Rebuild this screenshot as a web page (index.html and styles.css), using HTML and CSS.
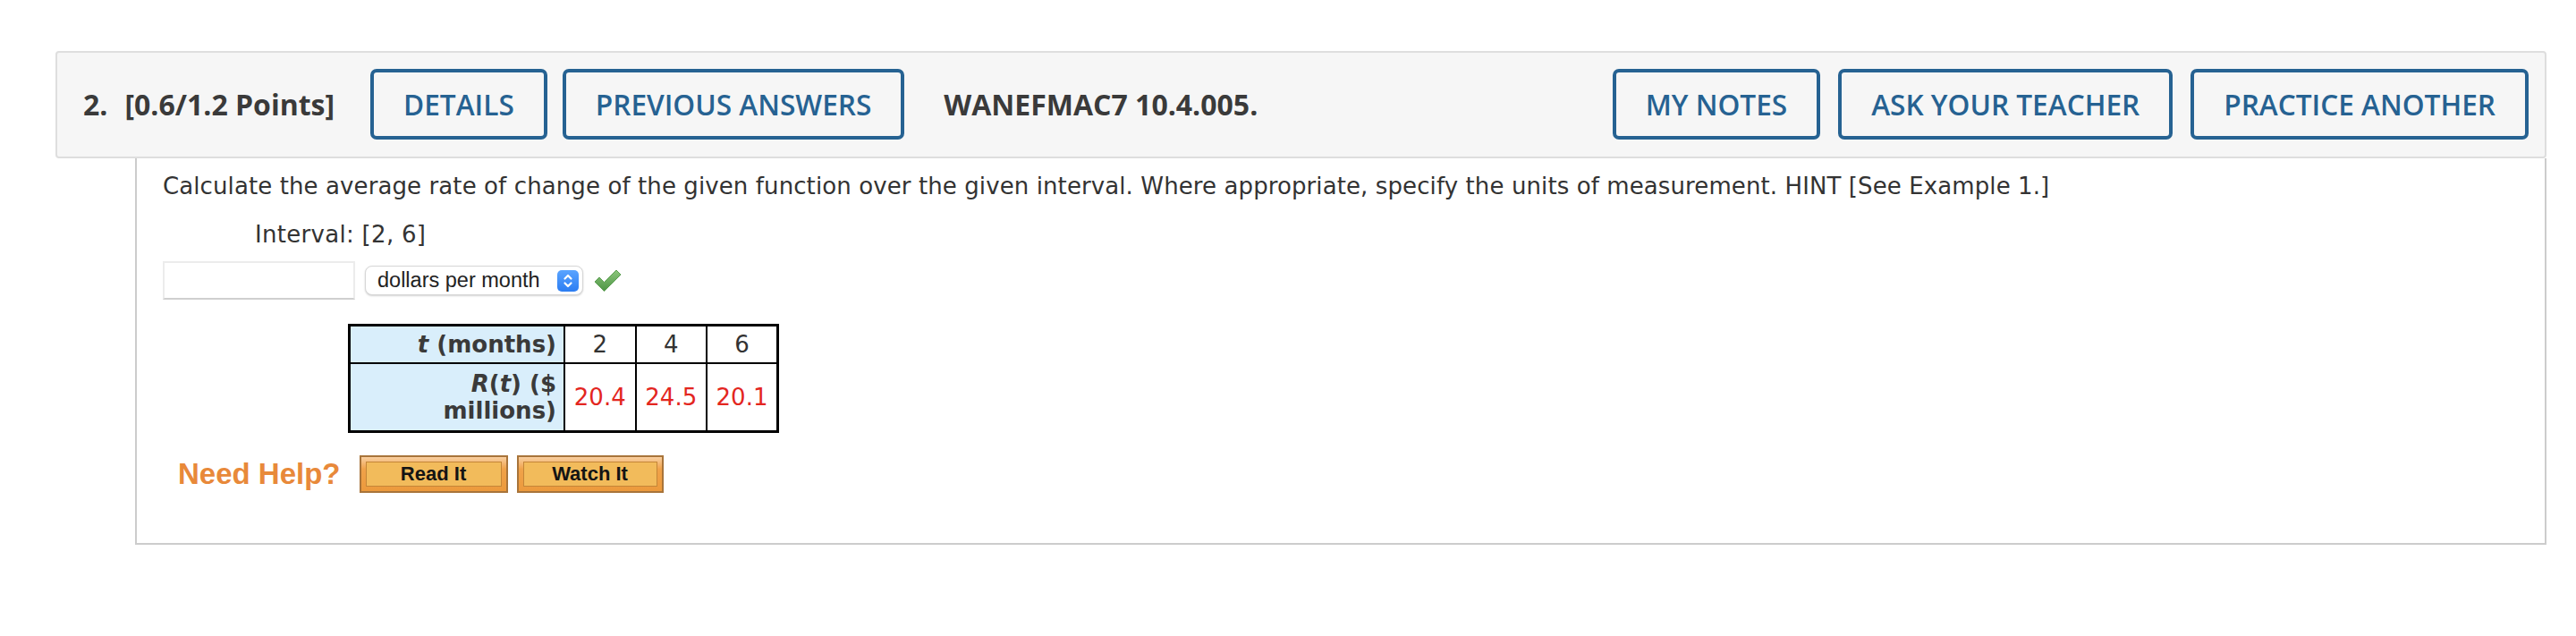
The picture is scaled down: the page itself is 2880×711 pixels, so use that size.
FILE: index.html
```html
<!DOCTYPE html>
<html lang="en">
<head>
<meta charset="utf-8">
<title>Question 2</title>
<link rel="stylesheet" href="styles.css">
</head>
<body>
<div class="question">
  <div class="q-header">
    <span class="q-num">2.</span>
    <span class="q-points">[0.6/1.2 Points]</span>
    <button class="q-btn q-btn-first">DETAILS</button>
    <button class="q-btn">PREVIOUS ANSWERS</button>
    <span class="q-code">WANEFMAC7 10.4.005.</span>
    <button class="q-btn q-btn-right">MY NOTES</button>
    <button class="q-btn">ASK YOUR TEACHER</button>
    <button class="q-btn">PRACTICE ANOTHER</button>
  </div>
  <div class="q-body">
    <p class="prompt">Calculate the average rate of change of the given function over the given interval. Where appropriate, specify the units of measurement. HINT [See Example 1.]</p>
    <p class="interval">Interval: [2, 6]</p>
    <div class="answer-row">
      <div class="answer-input"></div>
      <div class="unit-select">
        <span class="unit-text">dollars per month</span>
        <span class="stepper">
          <svg width="24" height="24" viewBox="0 0 24 24"><path d="M8.5 9.5 L12 6 L15.5 9.5" fill="none" stroke="#fff" stroke-width="2.2" stroke-linecap="round" stroke-linejoin="round"/><path d="M8.5 14.5 L12 18 L15.5 14.5" fill="none" stroke="#fff" stroke-width="2.2" stroke-linecap="round" stroke-linejoin="round"/></svg>
        </span>
      </div>
      <svg class="check" width="31" height="27" viewBox="0 0 31 27">
        <defs>
          <linearGradient id="cg" x1="0" y1="0" x2="0" y2="1">
            <stop offset="0" stop-color="#8cc67c"/>
            <stop offset="1" stop-color="#4d9444"/>
          </linearGradient>
        </defs>
        <path d="M1 15 L6 10 L11.5 15.5 L25 2 L30 7 L11.5 25.5 Z" fill="url(#cg)" stroke="#5c9e52" stroke-width="1" stroke-linejoin="round"/>
      </svg>
    </div>
    <table class="data">
      <tr class="r1">
        <th><i>t</i> (months)</th>
        <td>2</td>
        <td>4</td>
        <td>6</td>
      </tr>
      <tr class="r2">
        <th><i>R</i>(<i>t</i>) ($<br>millions)</th>
        <td class="red">20.4</td>
        <td class="red">24.5</td>
        <td class="red">20.1</td>
      </tr>
    </table>
    <div class="help-row">
      <span class="help-label">Need Help?</span>
      <span class="help-btn help-read"><span class="help-inner">Read It</span></span>
      <span class="help-btn help-watch"><span class="help-inner">Watch It</span></span>
    </div>
  </div>
</div>
</body>
</html>
```

FILE: styles.css
```css
html, body {
  margin: 0;
  padding: 0;
  background: #ffffff;
}

.question {
  margin: 57px 33px 0 62px;
}

.q-header {
  display: flex;
  align-items: center;
  background: #f6f6f6;
  border: 2px solid #dedede;
  border-radius: 4px;
  padding: 18px 18px 19px 29px;
  font-family: "Open Sans", "Liberation Sans", sans-serif;
  color: #3a3a3a;
}

.q-num {
  font-size: 32px;
  font-weight: 700;
  margin-right: 19px;
}

.q-points {
  font-size: 32px;
  font-weight: 700;
  margin-right: 40px;
}

.q-code {
  font-size: 32px;
  font-weight: 700;
  margin-left: 44px;
}

.q-btn {
  box-sizing: border-box;
  height: 79px;
  padding: 0 33px;
  border: 4px solid #266292;
  border-radius: 7px;
  background: transparent;
  color: #266292;
  font-family: "Open Sans", "Liberation Sans", sans-serif;
  font-size: 31.6px;
  font-weight: 600;
  margin-left: 20px;
  line-height: 1;
}

.q-btn-first {
  margin-left: 0;
}

.q-btn + .q-btn {
  margin-left: 17px;
}

.q-btn-right {
  margin-left: auto !important;
}

.q-btn-right ~ .q-btn {
  margin-left: 20px;
}

.q-body {
  margin-left: 89px;
  border: 2px solid #cccccc;
  border-top: none;
  padding: 13px 29px 56px 29px;
  font-family: "DejaVu Sans", Verdana, sans-serif;
  font-size: 26px;
  color: #333333;
}

.prompt {
  margin: 0;
  line-height: 36px;
  letter-spacing: 0.1px;
}

.interval {
  margin: 18px 0 0 103px;
  line-height: 36px;
  letter-spacing: 0.3px;
}

.answer-row {
  display: flex;
  align-items: center;
  margin-top: 12px;
  height: 43px;
}

.answer-input {
  box-sizing: border-box;
  width: 215px;
  height: 43px;
  border: 2px solid #ececec;
  border-bottom-color: #cfcfcf;
  background: #fff;
}

.unit-select {
  box-sizing: border-box;
  display: flex;
  align-items: center;
  justify-content: space-between;
  width: 244px;
  height: 33px;
  margin-left: 11px;
  padding: 0 4px 0 13px;
  border: 1px solid #d6d6d6;
  border-radius: 8px;
  background: #fff;
  box-shadow: 0 1px 2px rgba(0, 0, 0, 0.18);
}

.unit-text {
  font-family: "Liberation Sans", Arial, sans-serif;
  font-size: 23.5px;
  color: #222;
}

.stepper {
  display: flex;
  width: 24px;
  height: 24px;
  border-radius: 5px;
  background: linear-gradient(#5aa4ff, #2c7df2);
}

.check {
  display: block;
  margin-left: 12px;
}

.data {
  border-collapse: collapse;
  border: 3px solid #000;
  margin: 27px 0 0 207px;
  table-layout: fixed;
  width: 482px;
}

.data th,
.data td {
  border: 2px solid #000;
  line-height: 30px;
  padding: 5px 8px;
}

.data th {
  width: 222px;
  background: #d9eefb;
  text-align: right;
  font-weight: 700;
  color: #3a3a3a;
}

.data td {
  text-align: center;
  font-weight: 400;
  color: #333;
  padding-left: 0;
  padding-right: 0;
}

.data .r2 th,
.data .r2 td {
  padding-top: 7px;
  padding-bottom: 7px;
}

.data .red {
  color: #e3261f;
}

.help-row {
  display: flex;
  align-items: center;
  margin: 25px 0 0 17px;
}

.help-label {
  font-family: "Liberation Sans", Arial, sans-serif;
  font-weight: 700;
  font-size: 33px;
  color: #e8893a;
  margin-right: 21px;
}

.help-btn {
  box-sizing: border-box;
  display: flex;
  height: 42px;
  padding: 5px;
  border: 2px solid #a8743a;
  background: linear-gradient(#f9cfa0 0%, #f0a24a 35%, #ec9a3c 100%);
}

.help-read {
  width: 166px;
}

.help-watch {
  width: 164px;
  margin-left: 10px;
}

.help-inner {
  flex: 1;
  display: flex;
  align-items: center;
  justify-content: center;
  border: 1px solid #c48638;
  background: #f2bb5b;
  font-family: "Liberation Sans", Arial, sans-serif;
  font-weight: 700;
  font-size: 22px;
  color: #141414;
}
```
